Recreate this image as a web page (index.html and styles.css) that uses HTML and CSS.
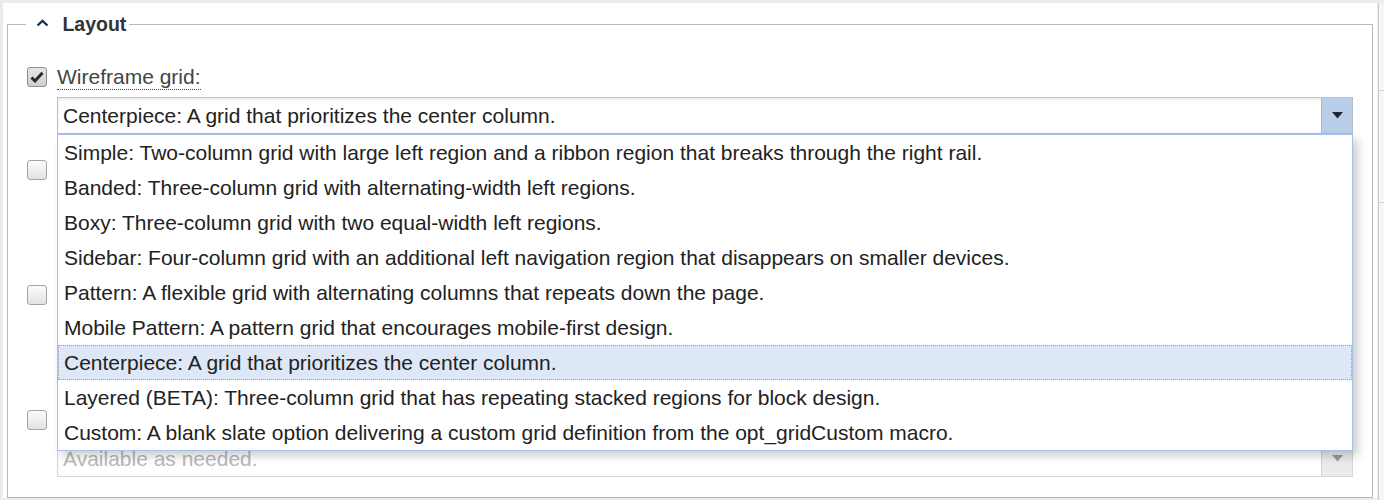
FILE: index.html
```html
<!DOCTYPE html>
<html lang="en">
  <head>
    <meta charset="UTF-8" />
    <title>Theme Settings</title>
    <link rel="stylesheet" href="styles.css">
  </head>
  <body>
    <div class="page">
      <div class="panel">
        <fieldset class="group">
          <legend>
            <svg class="caret" width="13" height="8" viewBox="0 0 13 8">
              <polyline points="1.5,6.5 6.5,1.8 11.5,6.5" fill="none" stroke="#1d3352" stroke-width="2.4" />
            </svg>
            Layout
          </legend>

          <!-- Wireframe grid (open dropdown) -->
          <div class="field">
            <div class="field-head">
              <span class="check checked">
                <svg width="14" height="12" viewBox="0 0 14 12">
                  <path d="M1.5 6.5 L5 10 L12.5 1.8" fill="none" stroke="#2b2b2b" stroke-width="3" />
                </svg>
              </span>
              <label class="help">Wireframe grid:</label>
            </div>
            <div class="combo">
              <div class="combo-value">Centerpiece: A grid that prioritizes the center column.</div>
              <span class="combo-btn">
                <svg width="11" height="7" viewBox="0 0 11 7"><polygon points="0,0 11,0 5.5,6.5" fill="#1c2836" /></svg>
              </span>
              <ul class="combo-list">
                <li>Simple: Two-column grid with large left region and a ribbon region that breaks through the right rail.</li>
                <li>Banded: Three-column grid with alternating-width left regions.</li>
                <li>Boxy: Three-column grid with two equal-width left regions.</li>
                <li>Sidebar: Four-column grid with an additional left navigation region that disappears on smaller devices.</li>
                <li>Pattern: A flexible grid with alternating columns that repeats down the page.</li>
                <li>Mobile Pattern: A pattern grid that encourages mobile-first design.</li>
                <li class="active">Centerpiece: A grid that prioritizes the center column.</li>
                <li>Layered (BETA): Three-column grid that has repeating stacked regions for block design.</li>
                <li>Custom: A blank slate option delivering a custom grid definition from the opt_gridCustom macro.</li>
              </ul>
            </div>
          </div>

          <!-- these rows sit under the open list -->
          <div class="field tall">
            <div class="field-head">
              <span class="check"></span>
              <label class="help">Page width:</label>
            </div>
            <div class="combo">
              <div class="combo-value">Full width</div>
              <span class="combo-btn">
                <svg width="11" height="7" viewBox="0 0 11 7"><polygon points="0,0 11,0 5.5,6.5" fill="#1c2836" /></svg>
              </span>
            </div>
          </div>

          <div class="field tall">
            <div class="field-head">
              <span class="check"></span>
              <label class="help">Gutter size:</label>
            </div>
            <div class="combo">
              <div class="combo-value">Default</div>
              <span class="combo-btn">
                <svg width="11" height="7" viewBox="0 0 11 7"><polygon points="0,0 11,0 5.5,6.5" fill="#1c2836" /></svg>
              </span>
            </div>
          </div>

          <div class="field">
            <div class="field-head">
              <span class="check"></span>
              <label class="help">Sticky header:</label>
            </div>
            <div class="combo disabled">
              <div class="combo-value">Available as needed.</div>
              <span class="combo-btn">
                <svg width="11" height="7" viewBox="0 0 11 7"><polygon points="0,0 11,0 5.5,6.5" fill="#9a9a9a" /></svg>
              </span>
            </div>
          </div>
        </fieldset>
      </div>
      <div class="side">
        <div class="side-row"></div>
        <div class="side-row second"></div>
      </div>
    </div>
  </body>
</html>
```

FILE: styles.css
```css
body {
  margin: 0;
  background: #ececec;
  font-family: "Liberation Sans", Arial, sans-serif;
  color: #333;
}
.page {
  display: flex;
  height: 500px;
  padding: 3px 0 0 3px;
  box-sizing: border-box;
}
.panel {
  flex: 1;
  background: #fff;
  padding: 10px 4px 0 4px;
  align-self: flex-start;
}
.group {
  margin: 0;
  border: 1px solid #b4b9c1;
  padding: 29px 19px 20px 19px;
}
.group legend {
  font-size: 19.5px;
  font-weight: bold;
  line-height: 22px;
  color: #333;
  padding: 0 3px 0 10px;
  margin-left: -1px;
}
.caret {
  margin-right: 8px;
  vertical-align: 4px;
}
.field {
  margin-bottom: 23px;
}
.field.tall {
  padding-bottom: 32px;
}
.field:last-child {
  margin-bottom: 0;
}
.field-head {
  display: flex;
  align-items: center;
  height: 26px;
}
.check {
  width: 18px;
  height: 18px;
  border: 1px solid #a4a4a4;
  border-radius: 3px;
  background: linear-gradient(#fbfbfb, #e2e2e2);
  display: flex;
  align-items: center;
  justify-content: center;
  margin-right: 10px;
}
.check.checked {
  background: linear-gradient(#e6e6e6, #cfcfcf);
  border-color: #8e8e8e;
}
.help {
  font-size: 21px;
  line-height: 24px;
  color: #444;
  border-bottom: 1px dotted #2f3fd0;
}
.combo {
  position: relative;
  display: flex;
  height: 37px;
  margin: 7px 0 0 30px;
  border: 1px solid #b8bdc6;
  box-sizing: border-box;
  background: #fff;
  box-shadow: inset 0 2px 3px rgba(0, 0, 0, 0.07);
}
.combo-value {
  flex: 1;
  padding-left: 5px;
  font-size: 21px;
  line-height: 35px;
  color: #222;
  white-space: nowrap;
}
.combo-btn {
  width: 30px;
  border-left: 1px solid #a9b6c7;
  background: #b9cee9;
  display: flex;
  align-items: center;
  justify-content: center;
}
.combo.disabled {
  border-color: #d6d6d6;
}
.combo.disabled .combo-value {
  color: #b8b8b8;
}
.combo.disabled .combo-btn {
  background: #ebebeb;
  border-left-color: #d6d6d6;
}
.combo-list {
  position: absolute;
  top: 100%;
  left: -1px;
  right: -1px;
  margin: 1px 0 0;
  padding: 0;
  list-style: none;
  background: #fff;
  border: 1px solid #a2c2ee;
  box-shadow: 5px 5px 9px rgba(0, 0, 0, 0.2);
  z-index: 5;
}
.combo-list li {
  height: 35px;
  box-sizing: border-box;
  border: 1px solid transparent;
  padding-left: 5px;
  font-size: 21px;
  line-height: 33px;
  color: #222;
  white-space: nowrap;
}
.combo-list li.active {
  background: #dde7f6;
  border: 1px dotted #7f9fe0;
}
.side {
  width: 5px;
  border-left: 1px solid #c9c9c9;
  background: #f6f6f6;
  margin-left: 1px;
}
.side-row {
  height: 87px;
  border-bottom: 1px solid #d4d4d4;
}
.side-row.second {
  height: 111px;
}
```
